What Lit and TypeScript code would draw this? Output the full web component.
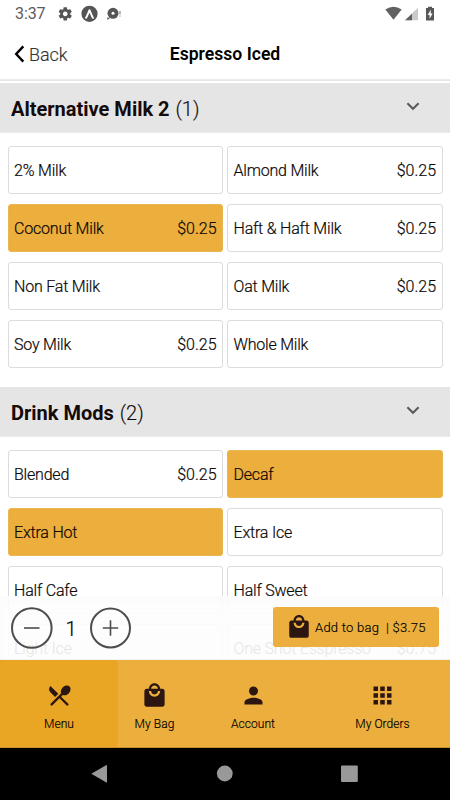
import { LitElement, html, css, svg } from "lit";
import { customElement, property, state } from "lit/decorators.js";
import { classMap } from "lit/directives/class-map.js";

const bagPath = svg`<path d="M19 6h-2c0-2.76-2.24-5-5-5S7 3.24 7 6H5c-1.1 0-1.99.9-1.99 2L3 20c0 1.1.9 2 2 2h14c1.1 0 2-.9 2-2V8c0-1.1-.9-2-2-2zm-7-3c1.66 0 3 1.34 3 3H9c0-1.66 1.34-3 3-3zm0 10c-2.76 0-5-2.24-5-5h2c0 1.66 1.34 3 3 3s3-1.34 3-3h2c0 2.76-2.24 5-5 5z"/>`;
const diningPath = svg`<path d="M8.1 13.34l2.83-2.83L3.91 3.5c-1.56 1.56-1.56 4.09 0 5.66l4.19 4.18zm6.78-1.81c1.53.71 3.68.21 5.27-1.38 1.91-1.91 2.28-4.65.81-6.12-1.46-1.46-4.2-1.1-6.12.81-1.59 1.59-2.09 3.74-1.38 5.27L3.7 19.87l1.41 1.41L12 14.41l6.88 6.88 1.41-1.41L13.41 13l1.47-1.47z"/>`;
const personPath = svg`<path d="M12 12c2.21 0 4-1.79 4-4s-1.79-4-4-4-4 1.79-4 4 1.79 4 4 4zm0 2c-2.67 0-8 1.34-8 4v2h16v-2c0-2.66-5.33-4-8-4z"/>`;
const appsPath = svg`<path d="M4 8h4V4H4v4zm6 12h4v-4h-4v4zm-6 0h4v-4H4v4zm0-6h4v-4H4v4zm6 0h4v-4h-4v4zm6-10v4h4V4h-4zm-6 4h4V4h-4v4zm6 6h4v-4h-4v4zm0 6h4v-4h-4v4z"/>`;

interface Option {
  name: string;
  price?: string;
  on?: boolean;
}

@customElement("option-group")
class OptionGroup extends LitElement {
  @property() heading = "";
  @property({ attribute: false }) options: Option[] = [];

  static styles = css`
    :host { display: block; }
    .head {
      height: 50px;
      box-sizing: border-box;
      padding: 0 27px 0 11px;
      display: flex;
      align-items: center;
      justify-content: space-between;
      background: #e5e5e5;
      border-bottom: 1px solid #ebebeb;
      color: #140b0a;
      font-size: 20px;
      font-weight: 300;
      -webkit-text-stroke: 0.15px;
    }
    .head b { font-weight: 700; margin-right: 1px; -webkit-text-stroke: 0; }
    .title { padding-top: 3px; }
    .chevron { width: 20px; height: 20px; margin-bottom: 4px; }
    .grid {
      display: grid;
      grid-template-columns: 215.5px 215.5px;
      grid-auto-rows: 48px;
      gap: 10px 4px;
      padding: 13px 7.5px 19px;
    }
    .card {
      display: flex;
      align-items: center;
      justify-content: space-between;
      box-sizing: border-box;
      border: 1px solid #dcdcdc;
      border-radius: 3px;
      padding: 1.5px 5.5px 0 5.5px;
      font-size: 16px;
      font-weight: 300;
      -webkit-text-stroke: 0.2px;
      color: #0c0606;
      background: #fff;
    }
    .name { letter-spacing: -0.2px; }
    .card.on { background: #ecae3c; border-color: #eab553; }
  `;

  render() {
    const [name, count] = this.heading.split("|");
    return html`
      <div class="head">
        <span class="title"><b>${name}</b> ${count}</span>
        <svg class="chevron" viewBox="0 0 20 20"><path d="M4.4 7.2l5.600 5.600 5.600-5.600" fill="none" stroke="#585858" stroke-width="2"/></svg>
      </div>
      <div class="grid">
        ${this.options.map((o) => html`
          <div class=${classMap({ card: true, on: !!o.on })}>
            <span class="name">${o.name}</span><span>${o.price ?? ""}</span>
          </div>`)}
      </div>`;
  }
}

@customElement("app-root")
class AppRoot extends LitElement {
  @state() private quantity = 1;

  private milks: Option[] = [
    { name: "2% Milk" }, { name: "Almond Milk", price: "$0.25" },
    { name: "Coconut Milk", price: "$0.25", on: true }, { name: "Haft & Haft Milk", price: "$0.25" },
    { name: "Non Fat Milk" }, { name: "Oat Milk", price: "$0.25" },
    { name: "Soy Milk", price: "$0.25" }, { name: "Whole Milk" },
  ];

  private mods: Option[] = [
    { name: "Blended", price: "$0.25" }, { name: "Decaf", on: true },
    { name: "Extra Hot", on: true }, { name: "Extra Ice" },
    { name: "Half Cafe" }, { name: "Half Sweet" },
    { name: "Light Ice" }, { name: "One Shot Esspresso", price: "$0.75" },
  ];

  static styles = css`
    :host {
      display: flex;
      flex-direction: column;
      width: 450px;
      height: 800px;
      overflow: hidden;
      background: #fff;
      font-family: Roboto, sans-serif;
      color: #000;
    }
    svg { display: block; flex: none; }
    .status {
      height: 27px;
      flex: none;
      display: flex;
      align-items: center;
      padding: 0 14px 0 15px;
      color: #444;
    }
    .clock { font-size: 16px; width: 42px; letter-spacing: -0.1px; color: #5c5c5c; }
    .spacer { flex: 1; }
    .nav {
      height: 53px;
      flex: none;
      display: grid;
      grid-template-columns: 1fr auto 1fr;
      align-items: center;
      padding: 2px 14px 0;
      box-sizing: border-box;
      border-bottom: 1px solid #ebebeb;
      margin-bottom: 3px;
      box-shadow: 0 1px 0 #e6e6e6;
    }
    .back { display: flex; align-items: center; gap: 4px; font-size: 18px; font-weight: 300; color: #333; -webkit-text-stroke: 0.15px; }
    .back span { letter-spacing: -0.1px; }
    .title { font-size: 17.6px; font-weight: 600; color: #000; }
    .content { height: 577px; flex: none; position: relative; overflow: hidden; }
    .order {
      position: absolute;
      left: 0; right: 0; bottom: 0;
      height: 64px;
      box-sizing: border-box;
      padding: 8px 3px 0;
      background: rgba(252, 252, 252, 0.86);
      border-bottom: 1px solid #eee;
    }
    .panel {
      height: 56px;
      display: flex;
      align-items: flex-start;
      padding: 3px 8px 0 8px;
      box-sizing: border-box;
      background: rgba(255, 255, 255, 0.35);
    }
    .qty { width: 36px; margin-right: 1px; text-align: center; font-size: 20px; font-weight: 300; -webkit-text-stroke: 0.2px; line-height: 44px; color: #000; }
    .add {
      width: 166.5px;
      height: 39.5px;
      box-sizing: border-box;
      padding-left: 13.5px;
      display: flex;
      align-items: center;
      border-radius: 3px;
      background: #ecae3c;
      font-size: 13px;
      font-weight: 300;
      -webkit-text-stroke: 0.15px;
      letter-spacing: 0.25px;
      white-space: pre;
    }
    .add span { padding: 2px 0 0 3px; }
    .tabs {
      height: 88px;
      flex: none;
      display: grid;
      grid-template-columns: 118px 73px 124px 135px;
      box-sizing: border-box;
      background: #ecae3c;
      border-bottom: 1px solid #c58f2d;
    }
    .tab {
      display: flex;
      flex-direction: column;
      align-items: center;
      padding-top: 22px;
      gap: 8px;
      font-size: 12px;
      font-weight: 300;
      -webkit-text-stroke: 0.15px;
      line-height: 15px;
      letter-spacing: 0.05px;
    }
    .tab.active { background: #e9a524; border-radius: 0 3px 3px 0; }
    .system {
      flex: 1;
      display: flex;
      justify-content: center;
      background: #000;
    }
  `;

  private tab(label: string, icon: unknown, active = false) {
    return html`<div class=${classMap({ tab: true, active })}>
      <svg width="27" height="27" viewBox="0 0 24 24" fill="#2b1612">${icon}</svg>
      <span>${label}</span>
    </div>`;
  }

  render() {
    return html`
      <div class="status">
        <span class="clock">${"3:37"}</span>
        <svg width="68" height="20" viewBox="57 3 68 20">
          <g transform="translate(57.200 4.800) scale(.67)" fill="#555"><path d="M19.43 12.98c.04-.32.07-.64.07-.98s-.03-.66-.07-.98l2.11-1.65c.19-.15.24-.42.12-.64l-2-3.46c-.12-.22-.39-.3-.61-.22l-2.49 1c-.52-.4-1.08-.73-1.69-.98l-.38-2.65C14.46 2.18 14.25 2 14 2h-4c-.25 0-.46.18-.49.42l-.38 2.65c-.61.25-1.17.59-1.69.98l-2.49-1c-.23-.09-.49 0-.61.22l-2 3.46c-.13.22-.07.49.12.64l2.11 1.65c-.04.32-.07.65-.07.98s.03.66.07.98l-2.11 1.65c-.19.15-.24.42-.12.64l2 3.46c.12.22.39.3.61.22l2.49-1c.52.4 1.08.73 1.69.98l.38 2.65c.03.24.24.42.49.42h4c.25 0 .46-.18.49-.42l.38-2.65c.61-.25 1.17-.59 1.69-.98l2.49 1c.23.09.49 0 .61-.22l2-3.46c.12-.22.07-.49-.12-.64l-2.11-1.65zM12 15.5c-1.93 0-3.5-1.57-3.5-3.5s1.57-3.5 3.5-3.5 3.5 1.57 3.5 3.5-1.57 3.5-3.5 3.5z"/></g>
          <circle cx="89.5" cy="12.800" r="8.1" fill="#555"/>
          <path d="M86 16.800c1.2-1.4 2-4.400 3.500-7.600 1.500 3.200 2.300 6.200 3.500 7.600" fill="none" stroke="#fff" stroke-width="1.900" stroke-linecap="round" stroke-linejoin="round"/>
          <circle cx="113" cy="12.300" r="5.500" fill="#555"/>
          <circle cx="113" cy="12.300" r="1.500" fill="#fff"/>
          <path d="M107.500 16l2.300 2-2.700.5z" fill="#555"/>
          <path d="M120 10v3.300M120 14.400v1" stroke="#777" stroke-width="1.100"/>
        </svg>
        <div class="spacer"></div>
        <svg width="52" height="20" viewBox="384 3 52 20">
          <path d="M385.300 8.400Q393.500 3.300 401.700 8.400L393.500 18.700z" fill="#616161"/>
          <path d="M418 6.700v12.500h-13z" fill="#cacaca"/>
          <path d="M412 12.700v6.500h-7z" fill="#606060"/>
          <path d="M426 7h2V5.700h4V7h2v12.500h-8z" fill="#575757"/>
          <path d="M430.800 8.700l-3.200 5.200h2v3.800l3-5.200h-1.800z" fill="#fff"/>
        </svg>
      </div>
      <div class="nav">
        <div class="back">
          <svg width="11" height="18" viewBox="0 0 11 18"><path d="M9.300 1.400L2.200 9l7.100 7.600" fill="none" stroke="#000" stroke-width="2.400"/></svg>
          <span>Back</span>
        </div>
        <span class="title">Espresso Iced</span>
        <span></span>
      </div>
      <div class="content">
        <option-group heading="Alternative Milk 2|(1)" .options=${this.milks}></option-group>
        <option-group heading="Drink Mods|(2)" .options=${this.mods}></option-group>
        <div class="order">
          <div class="panel">
            <svg width="42" height="42" viewBox="0 0 42 42" fill="none" stroke="#4d4d4d"><circle cx="20.800" cy="21" r="19.800" stroke-width="2"/><path d="M13 21h15.500" stroke-width="1.600"/></svg>
            <div class="qty">${this.quantity}</div>
            <svg width="42" height="42" viewBox="0 0 42 42" fill="none" stroke="#4d4d4d"><circle cx="20.500" cy="21" r="19.500" stroke-width="2"/><path d="M12.800 21h15.400M20.500 13.300v15.400" stroke-width="1.600"/></svg>
            <div class="spacer"></div>
            <div class="add">
              <svg width="26" height="26" viewBox="0 0 24 24" fill="#2b1612">${bagPath}</svg><span>Add to bag  | $3.75</span>
            </div>
          </div>
        </div>
      </div>
      <div class="tabs">
        ${this.tab("Menu", diningPath, true)}
        ${this.tab("My Bag", bagPath)}
        ${this.tab("Account", personPath)}
        ${this.tab("My Orders", appsPath)}
      </div>
      <div class="system">
        <svg width="450" height="52" viewBox="0 0 450 52" fill="#999">
          <path d="M91.300 25.700L106.500 17q.5 0 .5.600v16.400q0 .700-.6.500z"/>
          <circle cx="224.800" cy="25.500" r="7.900"/>
          <rect x="341" y="17.500" width="16.800" height="16.500" rx="1"/>
        </svg>
      </div>`;
  }
}
